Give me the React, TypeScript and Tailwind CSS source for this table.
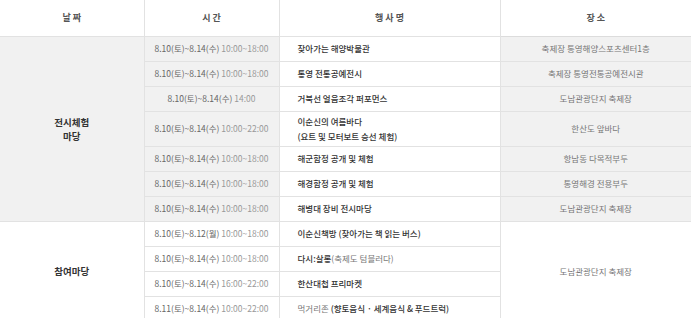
import React from 'react';

type Row = {
  date: string;
  time: string;
  name: React.ReactNode;
  place?: string;
  tall?: boolean;
};

const exhibitRows: Row[] = [
  { date: '8.10(토)~8.14(수)', time: '10:00~18:00', name: '찾아가는 해양박물관', place: '축제장 통영해양스포츠센터1층' },
  { date: '8.10(토)~8.14(수)', time: '10:00~18:00', name: '통영 전통공예전시', place: '축제장 통영전통공예전시관' },
  { date: '8.10(토)~8.14(수)', time: '14:00', name: '거북선 얼음조각 퍼포먼스', place: '도남관광단지 축제장' },
  {
    date: '8.10(토)~8.14(수)',
    time: '10:00~22:00',
    name: (
      <>
        이순신의 여름바다
        <br />
        (요트 및 모터보트 승선 체험)
      </>
    ),
    place: '한산도 앞바다',
    tall: true
  },
  { date: '8.10(토)~8.14(수)', time: '10:00~18:00', name: '해군함정 공개 및 체험', place: '항남동 다목적부두' },
  { date: '8.10(토)~8.14(수)', time: '10:00~18:00', name: '해경함정 공개 및 체험', place: '통영해경 전용부두' },
  { date: '8.10(토)~8.14(수)', time: '10:00~18:00', name: '해병대 장비 전시마당', place: '도남관광단지 축제장' }
];

const joinRows: Row[] = [
  { date: '8.10(토)~8.12(월)', time: '10:00~18:00', name: '이순신책방 (찾아가는 책 읽는 버스)' },
  {
    date: '8.10(토)~8.14(수)',
    time: '10:00~18:00',
    name: (
      <>
        다시:살롱<span className="font-normal text-[#777]">(축제도 텀블러다)</span>
      </>
    )
  },
  { date: '8.10(토)~8.14(수)', time: '16:00~22:00', name: '한산대첩 프리마켓' },
  {
    date: '8.11(토)~8.14(수)',
    time: '10:00~22:00',
    name: (
      <>
        <span className="font-normal text-[#777]">먹거리존 </span>(향토음식 · 세계음식 &amp; 푸드트럭)
      </>
    )
  }
];

const line = 'border-[#e2e2e2]';

function TimeCell({ row, gray }: { row: Row; gray: boolean }) {
  return (
    <td className={`border-r border-b ${line} text-center whitespace-nowrap ${gray ? 'bg-[#f1f1f1]' : 'bg-white'}`}>
      <span className="text-[#666]">{row.date}</span>{' '}
      <span className="text-[#999]">{row.time}</span>
    </td>
  );
}

function NameCell({ row }: { row: Row }) {
  return (
    <td className={`border-r border-b ${line} bg-white pl-[18px] text-left font-medium text-[#333] leading-[15px]`}>
      {row.name}
    </td>
  );
}

export default function App() {
  return (
    <div className="w-[700px] h-[318px] overflow-hidden bg-white" style={{ fontFamily: '"Noto Sans CJK KR", "Noto Sans", sans-serif' }}>
      <table className="w-[691px] table-fixed border-collapse text-[8.5px]">
        <colgroup>
          <col className="w-[144px]" />
          <col className="w-[135px]" />
          <col className="w-[221px]" />
          <col className="w-[191px]" />
        </colgroup>
        <thead>
          <tr className="h-[36px]">
            {['날 짜', '시 간', '행 사 명', '장 소'].map((h, i) => (
              <th
                key={h}
                className={`border-b border-[#dcdcdc] ${i < 3 ? `border-r ${line}` : ''} bg-white font-bold text-[#555] text-[9px] text-center`}
              >
                {h}
              </th>
            ))}
          </tr>
        </thead>
        <tbody>
          {exhibitRows.map((row, i) => (
            <tr key={'e' + i} className={row.tall ? 'h-[35px]' : 'h-[25px]'}>
              {i === 0 && (
                <td rowSpan={exhibitRows.length} className={`border-r border-b ${line} bg-[#f1f1f1] text-center font-bold text-[#333] text-[9.5px] leading-[14px]`}>
                  전시체험
                  <br />
                  마당
                </td>
              )}
              <TimeCell row={row} gray />
              <NameCell row={row} />
              <td className={`border-b ${line} bg-[#f1f1f1] text-center text-[#777]`}>{row.place}</td>
            </tr>
          ))}
          {joinRows.map((row, i) => (
            <tr key={'j' + i} className="h-[25px]">
              {i === 0 && (
                <td rowSpan={joinRows.length} className={`border-r border-b ${line} bg-white text-center font-bold text-[#333] text-[9.5px]`}>
                  참여마당
                </td>
              )}
              <TimeCell row={row} gray={false} />
              <NameCell row={row} />
              {i === 0 && (
                <td rowSpan={joinRows.length} className={`border-b ${line} bg-white text-center text-[#777]`}>
                  도남관광단지 축제장
                </td>
              )}
            </tr>
          ))}
        </tbody>
      </table>
    </div>
  );
}
